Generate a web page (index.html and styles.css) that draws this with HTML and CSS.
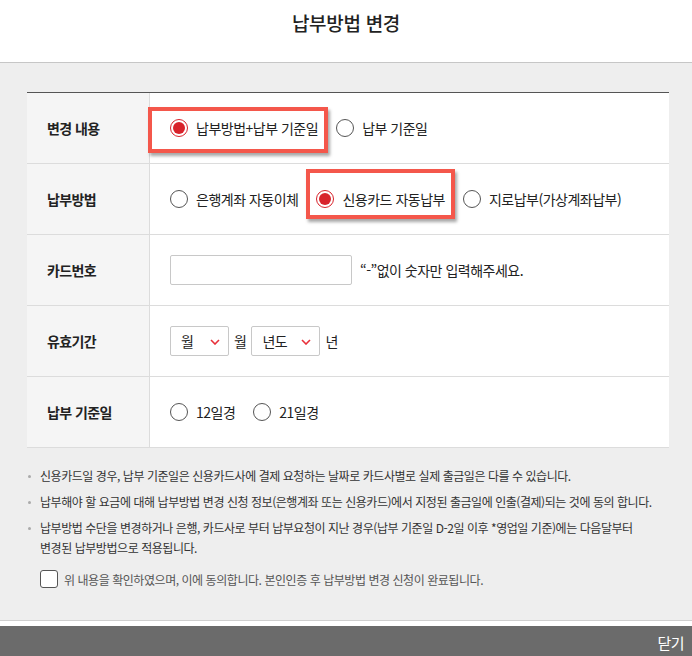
FILE: index.html
```html
<!DOCTYPE html>
<html lang="ko">
<head>
<meta charset="utf-8">
<title>납부방법 변경</title>
<link rel="stylesheet" href="styles.css">
</head>
<body>
<div class="page">
  <header class="header"><h1 class="title">납부방법 변경</h1></header>
  <main class="content">
    <div class="form">
      <div class="row">
        <div class="label">변경 내용</div>
        <div class="field">
          <label class="opt mark mark-a"><span class="radio on"></span><span>납부방법+납부 기준일</span></label>
          <label class="opt"><span class="radio"></span><span>납부 기준일</span></label>
        </div>
      </div>
      <div class="row">
        <div class="label">납부방법</div>
        <div class="field">
          <label class="opt"><span class="radio"></span><span>은행계좌 자동이체</span></label>
          <label class="opt mark mark-b"><span class="radio on"></span><span>신용카드 자동납부</span></label>
          <label class="opt"><span class="radio"></span><span>지로납부(가상계좌납부)</span></label>
        </div>
      </div>
      <div class="row">
        <div class="label">카드번호</div>
        <div class="field">
          <span class="input"></span>
          <span class="hint">“-”없이 숫자만 입력해주세요.</span>
        </div>
      </div>
      <div class="row">
        <div class="label">유효기간</div>
        <div class="field field-tight">
          <span class="select select-m"><span>월</span><svg class="chev" width="10" height="6" viewBox="0 0 10 6"><polyline points="1,1 5,5 9,1" fill="none" stroke="#e8303a" stroke-width="1.6"/></svg></span>
          <span class="unit">월</span>
          <span class="select select-y"><span>년도</span><svg class="chev" width="10" height="6" viewBox="0 0 10 6"><polyline points="1,1 5,5 9,1" fill="none" stroke="#e8303a" stroke-width="1.6"/></svg></span>
          <span class="unit">년</span>
        </div>
      </div>
      <div class="row">
        <div class="label">납부 기준일</div>
        <div class="field">
          <label class="opt"><span class="radio"></span><span>12일경</span></label>
          <label class="opt"><span class="radio"></span><span>21일경</span></label>
        </div>
      </div>
    </div>
    <ul class="notes">
      <li>신용카드일 경우, 납부 기준일은 신용카드사에 결제 요청하는 날짜로 카드사별로 실제 출금일은 다를 수 있습니다.</li>
      <li>납부해야 할 요금에 대해 납부방법 변경 신청 정보(은행계좌 또는 신용카드)에서 지정된 출금일에 인출(결제)되는 것에 동의 합니다.</li>
      <li>납부방법 수단을 변경하거나 은행, 카드사로 부터 납부요청이 지난 경우(납부 기준일 D-2일 이후 *영업일 기준)에는 다음달부터<br>변경된 납부방법으로 적용됩니다.</li>
    </ul>
    <label class="agree"><span class="check"></span><span>위 내용을 확인하였으며, 이에 동의합니다. 본인인증 후 납부방법 변경 신청이 완료됩니다.</span></label>
  </main>
  <footer class="footer"><span class="close">닫기</span></footer>
</div>
</body>
</html>
```

FILE: styles.css
```css
* { box-sizing: border-box; }
html, body { margin: 0; padding: 0; }
body {
  font-family: "Noto Sans CJK KR", "Noto Sans", sans-serif;
  color: #333;
  background: #fff;
  width: 692px;
  height: 656px;
  overflow: hidden;
}
.page { display: flex; flex-direction: column; height: 656px; }

.header {
  height: 63px;
  border-bottom: 1px solid #c6c6c6;
  background: #fff;
  display: flex;
  justify-content: center;
  padding-top: 8px;
}
.title {
  margin: 0;
  font-size: 19px;
  line-height: 30px;
  font-weight: 500;
  color: #222;
  letter-spacing: -0.3px;
}

.content {
  height: 558px;
  background: #eeeeee;
  border-bottom: 1px solid #cfcfcf;
  padding: 29px 23px 0 27px;
}

.form {
  border-top: 1px solid #555;
  background: #fff;
}
.row {
  display: flex;
  height: 71px;
  border-bottom: 1px solid #dcdcdc;
}
.label {
  width: 123px;
  flex: none;
  background: #f5f5f5;
  border-right: 1px solid #dcdcdc;
  padding-left: 20px;
  display: flex;
  align-items: center;
  font-size: 14px;
  letter-spacing: -0.6px;
  font-weight: 700;
  color: #222;
}
.field {
  flex: 1;
  display: flex;
  align-items: center;
  gap: 18px;
  padding-left: 20px;
  font-size: 14px;
  letter-spacing: -0.5px;
  color: #222;
}
.field-tight { gap: 4px; }

.opt {
  position: relative;
  display: inline-flex;
  align-items: center;
  gap: 8px;
  height: 20px;
  line-height: 20px;
}
.radio {
  width: 18px;
  height: 18px;
  border: 1px solid #555;
  border-radius: 50%;
  background: #fff;
  flex: none;
  display: flex;
  align-items: center;
  justify-content: center;
}
.radio.on { border-color: #d8232b; }
.radio.on::after {
  content: "";
  width: 12px;
  height: 12px;
  border-radius: 50%;
  background: #d8232b;
}

.mark::before {
  content: "";
  position: absolute;
  border: 4px solid #f4574b;
  box-shadow: 2px 3px 3px rgba(0, 0, 0, 0.35);
  pointer-events: none;
}
.mark-a::before { left: -22px; right: -10px; top: -11px; bottom: -15px; }
.mark-b::before { left: -10px; right: -10px; top: -20px; bottom: -10px; }

.input {
  width: 182px;
  height: 30px;
  border: 1px solid #c8c8c8;
  border-radius: 2px;
  background: #fff;
  margin-right: -10px;
}

.select {
  height: 30px;
  border: 1px solid #c8c8c8;
  border-radius: 2px;
  background: #fff;
  display: inline-flex;
  align-items: center;
  justify-content: space-between;
  padding: 0 8px 0 10px;
}
.select-m { width: 59px; }
.select-y { width: 69px; }
.chev { display: block; margin-top: 1px; }
.unit { padding: 0 1px; }

.notes {
  list-style: none;
  margin: 18px 0 0 0;
  padding: 0;
  font-size: 12px;
  letter-spacing: -0.45px;
  line-height: 20px;
  color: #333;
}
.notes li {
  position: relative;
  padding-left: 13px;
  white-space: nowrap;
  margin-bottom: 6px;
}
.notes li::before {
  content: "";
  position: absolute;
  left: 1px;
  top: 9px;
  width: 3px;
  height: 3px;
  border-radius: 50%;
  background: #aaa;
}
.agree {
  display: flex;
  align-items: center;
  gap: 6px;
  margin: 12px 0 0 13px;
  font-size: 12px;
  letter-spacing: -0.45px;
  color: #555;
}
.check {
  width: 18px;
  height: 18px;
  border: 1px solid #555;
  border-radius: 3px;
  background: #fff;
  flex: none;
}

.footer {
  margin-top: 5px;
  flex: 1;
  background: #6b6b6b;
  display: flex;
  justify-content: flex-end;
  align-items: center;
  padding: 3px 8px 0 0;
}
.close {
  color: #fff;
  font-size: 15px;
  letter-spacing: -0.5px;
}
```
